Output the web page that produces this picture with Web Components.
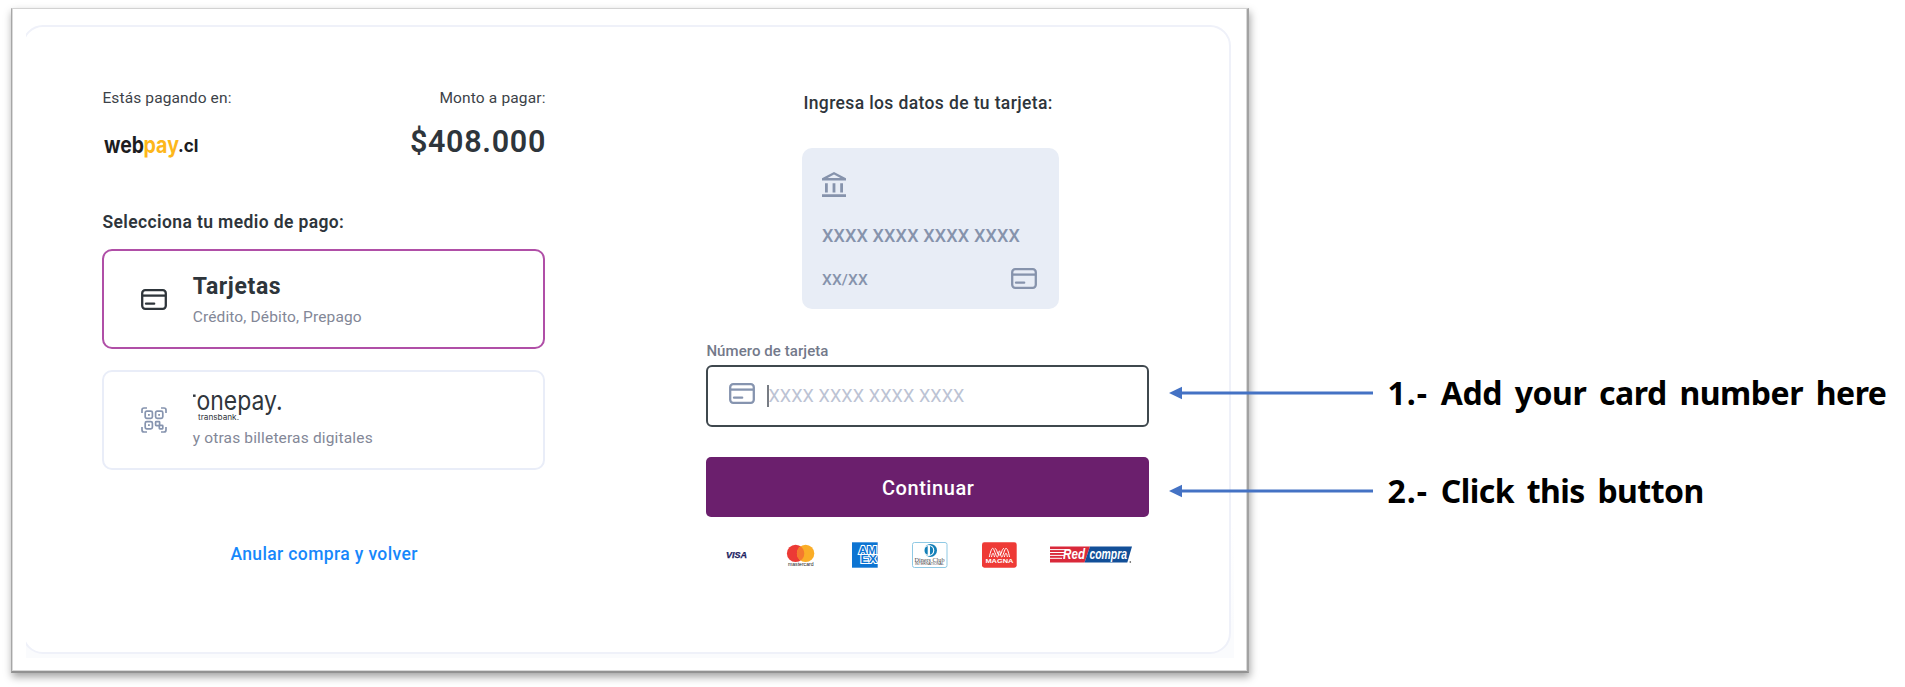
<!DOCTYPE html>
<html lang="es">
<head>
<meta charset="utf-8">
<title>Webpay</title>
<style>
html,body{margin:0;background:#fff;width:1905px;height:687px;overflow:hidden;font-family:Roboto,sans-serif;color:#2e353b}
body{display:flex;align-items:flex-start}
</style>
</head>
<body>
<pay-frame>
  <pay-summary slot="left"></pay-summary>
  <pay-form slot="right"></pay-form>
</pay-frame>
<guide-notes></guide-notes>
<script>
const define=(name,html,after)=>{
  const t=document.createElement('template');t.innerHTML=html;
  customElements.define(name,class extends HTMLElement{
    connectedCallback(){
      if(this.shadowRoot)return;
      this.attachShadow({mode:'open'}).appendChild(t.content.cloneNode(true));
      if(after)after(this);
    }
  });
};

/* One line of text whose tracking is set so that it spans the given width. */
define('text-line',`<style>:host{display:block;white-space:nowrap}span{display:inline-block}</style><span><slot></slot></span>`,el=>{
  const s=el.shadowRoot.querySelector('span'),w=+el.getAttribute('span');
  if(w){const gap=(w-s.getBoundingClientRect().width)/(el.textContent.length-1);
    s.style.letterSpacing=gap+'px';s.style.marginRight=-gap+'px';}
});

define('card-icon',`<style>:host{display:block;width:26px;height:21px;flex:none}svg{display:block}</style>
<svg width="26" height="21" viewBox="0 0 26 21" fill="none" stroke="currentColor" stroke-width="2.3"><rect x="1.2" y="1.2" width="23.6" height="18.6" rx="3"/><path d="M1.2 6.6H24.8"/><path d="M5 14.7H13.2" stroke-linecap="round"/></svg>`);

define('bank-icon',`<style>:host{display:block;width:24px;height:25px}svg{display:block}</style>
<svg width="24" height="25" viewBox="0 0 24 25" fill="currentColor"><path fill-rule="evenodd" d="M12 0L24 6.2V8.4H0V6.2ZM12 2.5L5.6 6H18.4Z"/><path d="M3 11.3H5.8V20.4H3ZM10.6 11.3H13.4V20.4H10.6ZM18.2 11.3H21V20.4H18.2ZM0 22.3H24V25H0Z"/></svg>`);

define('qr-icon',`<style>:host{display:block;width:26px;height:26px;flex:none}svg{display:block}</style>
<svg width="26" height="26" viewBox="0 0 26 26" fill="none" stroke="currentColor" stroke-width="1.7"><path d="M1 6V3Q1 1 3 1H6M20 1H23Q25 1 25 3V6M25 20V23Q25 25 23 25H20M6 25H3Q1 25 1 23V20"/><rect x="4.2" y="4.2" width="7.2" height="7.2" rx="1.6"/><rect x="14.6" y="4.2" width="7.2" height="7.2" rx="1.6"/><rect x="4.2" y="14.6" width="7.2" height="7.2" rx="1.6"/><rect x="14.6" y="14.6" width="4" height="4" rx=".6"/><rect x="18.3" y="18.3" width="3.5" height="3.5" rx=".6"/><path stroke="none" fill="currentColor" d="M7 7h1.8v1.8H7zM17.2 7h1.8v1.8h-1.8zM7 17.2h1.8v1.8H7z"/></svg>`);

define('pay-frame',`<style>
:host{display:block;box-sizing:border-box;flex:none;width:1238px;height:665px;margin:8px 0 0 11px;padding:16px 0 0 14px;background:#fff;
border-style:solid;border-width:1px 2px 2px 1px;border-color:#d2d2d2 #a2a2a2 #929292 #a6a6a6;
box-shadow:1px 4px 8px rgba(0,0,0,.36),inset -1px -1px 0 #d8d8d8,inset 1px 0 0 #dadada}
.clip{overflow:hidden;width:1208px;height:633px;background:linear-gradient(#fff 500px,#fafbfd 600px)}
.card{box-sizing:border-box;width:1209px;height:629px;margin-left:-4px;border:2px solid #eff1f9;border-radius:21px;background:#fff;
display:grid;grid-template-columns:443px 443px;column-gap:161px;padding-left:78.4px;align-items:start}
</style><div class="clip"><div class="card"><slot name="left"></slot><slot name="right"></slot></div></div>`);

define('webpay-logo',`<style>:host{display:block;height:36px}svg{display:block;overflow:visible}text{font-family:Inter,sans-serif;font-weight:700}</style>
<svg width="100" height="36"><text x="2" y="28.5" font-size="23" textLength="40" lengthAdjust="spacingAndGlyphs" fill="#1d1d1f">web</text><text x="41.5" y="28.5" font-size="23" font-weight="600" textLength="35.5" lengthAdjust="spacingAndGlyphs" fill="#fdb71a">pay</text><text x="76" y="28" font-size="18" textLength="20.5" lengthAdjust="spacingAndGlyphs" fill="#1d1d1f">.cl</text></svg>`);

define('onepay-logo',`<style>:host{display:block;height:32px}svg{display:block;margin-top:-12px;overflow:visible}text{font-family:Inter,sans-serif;fill:#30363c}</style>
<svg width="110" height="50"><rect x="0" y="14.5" width="2.6" height="2.4" fill="#30363c"/><text x="3.5" y="29.5" font-size="26" textLength="86" lengthAdjust="spacingAndGlyphs">onepay.</text><text x="5" y="40" font-size="8" textLength="41" lengthAdjust="spacingAndGlyphs">transbank.</text></svg>`);

define('pay-option',`<style>
:host{box-sizing:border-box;display:flex;align-items:center;gap:26px;height:100px;border:2px solid #e9edf8;border-radius:10px;padding-left:36.3px;color:#8694af;background:#fff}
:host([selected]){border-color:#b04fa7;color:#2e353b}
.body{display:flex;flex-direction:column;gap:6px;margin-top:2px}
:host(:not([selected])) .body{gap:4px;margin-top:0}
.sub{font-size:15.5px;line-height:20px;color:#838797}
</style><slot name="icon"></slot><div class="body"><slot name="title"></slot><div class="sub"><slot></slot></div></div>`);

define('pay-summary',`<style>
:host{display:flex;flex-direction:column;padding-top:61px}
header{display:flex;justify-content:space-between}
header>div{display:flex;flex-direction:column;gap:16px}
.r{align-items:flex-end}
.label{font-size:15.5px;line-height:20px;color:#3c4248}
.amount{font-size:30.5px;line-height:36px;font-weight:600}
.h{font-size:17.5px;line-height:24px;font-weight:600;margin:50px 0 15px}
.t{font-size:23px;line-height:28px;font-weight:700}
.second{margin-top:21px}
.cancel{align-self:center;margin-top:72px;font-size:17.5px;line-height:24px;font-weight:500;color:#1787fb}
</style>
<header><div><text-line class="label" span="129">Estás pagando en:</text-line><webpay-logo></webpay-logo></div>
<div class="r"><text-line class="label" span="106">Monto a pagar:</text-line><text-line class="amount" span="135.5">$408.000</text-line></div></header>
<text-line class="h" span="241.5">Selecciona tu medio de pago:</text-line>
<pay-option selected><card-icon slot="icon"></card-icon><text-line slot="title" class="t" span="88">Tarjetas</text-line><text-line span="169">Crédito, Débito, Prepago</text-line></pay-option>
<pay-option class="second"><qr-icon slot="icon"></qr-icon><onepay-logo slot="title"></onepay-logo><text-line span="180">y otras billeteras digitales</text-line></pay-option>
<text-line class="cancel" span="187">Anular compra y volver</text-line>`);

define('card-preview',`<style>
:host{box-sizing:border-box;display:flex;flex-direction:column;width:257px;height:161px;border-radius:10px;background:#e8edf6;padding:24px 22px 0 20px;color:#8693ac}
.num{font-size:18px;line-height:24px;font-weight:500;margin-top:27px}
.row{display:flex;justify-content:space-between;align-items:center;margin-top:17px}
.exp{font-size:15.5px;line-height:22px;font-weight:500;padding-top:4px}
</style><bank-icon></bank-icon><text-line class="num" span="198">XXXX XXXX XXXX XXXX</text-line>
<div class="row"><text-line class="exp" span="46">XX/XX</text-line><card-icon></card-icon></div>`);

define('card-field',`<style>
:host{display:block}
.label{font-size:15px;line-height:20px;font-weight:500;color:#73798a}
.box{box-sizing:border-box;height:62px;margin-top:4px;border:2px solid #3f484e;border-radius:6px;display:flex;align-items:center;padding:0 0 1px 21px;color:#8694af}
.caret{width:2px;height:22px;background:#777c83;margin-left:12px}
card-icon{margin-top:-4px}
.ph{font-size:18px;line-height:24px;color:#bcc3d4;margin-left:-1px;padding-top:1px}
</style><text-line class="label" span="122">Número de tarjeta</text-line>
<div class="box"><card-icon></card-icon><div class="caret"></div><text-line class="ph" span="196">XXXX XXXX XXXX XXXX</text-line></div>`);

define('brand-row',`<style>:host{display:block;height:30px}svg{display:block}text{font-family:"Liberation Sans",sans-serif}</style>
<svg width="443" height="30" viewBox="706 540 443 30">
<text x="726" y="558" font-size="8.6" font-weight="700" font-style="italic" fill="#20225f" stroke="#20225f" stroke-width=".25" textLength="21" lengthAdjust="spacingAndGlyphs">VISA</text>
<circle cx="795.6" cy="553.4" r="8.7" fill="#ec3a35"/><circle cx="805.6" cy="553.4" r="8.7" fill="#faad27"/><path d="M800.6 546.3A8.7 8.7 0 0 1 800.6 560.5A8.7 8.7 0 0 1 800.6 546.3Z" fill="#f4792e"/>
<text x="788" y="566.3" font-size="5" font-family="Inter" fill="#222" textLength="25.5" lengthAdjust="spacingAndGlyphs">mastercard</text>
<rect x="852" y="542.3" width="25.7" height="25.4" fill="#0d74d2"/>
<g fill="#0d74d2" stroke="#fff" stroke-width="1.8" paint-order="stroke" font-weight="700"><text x="858.5" y="554" font-size="10" textLength="18.5" lengthAdjust="spacingAndGlyphs">AM</text><text x="860.5" y="562.6" font-size="10" textLength="16.5" lengthAdjust="spacingAndGlyphs">EX</text></g>
<rect x="912.5" y="542.5" width="34.5" height="25" rx="2" fill="#fff" stroke="#8fc9e4"/>
<circle cx="930.5" cy="550.4" r="6.5" fill="#1480b8"/><circle cx="928.8" cy="550.4" r="5.5" fill="#fff"/><path d="M927.7 546.1A4.5 4.5 0 0 0 927.7 554.7ZM930 546.1A4.5 4.5 0 0 1 930 554.7Z" fill="#1480b8"/>
<text x="914.5" y="561.7" font-size="6" style="font-family:'Liberation Serif',serif" fill="#444" textLength="30" lengthAdjust="spacingAndGlyphs">Diners Club</text><text x="915" y="565.4" font-size="3" fill="#444" textLength="29" lengthAdjust="spacingAndGlyphs">INTERNATIONAL</text>
<rect x="982" y="542.3" width="34.7" height="25.4" rx="2.4" fill="#ee3a36"/>
<path d="M989.3 557C990.5 552 991.5 548.3 992.8 548.3S996 557 997.3 557S998.6 550.8 999.4 550.8S1000.6 557 1001.8 557S1004.6 548.3 1006 548.3S1008.5 552 1009.5 557M991.5 557C992.5 552 993.5 552 994.5 557M1004.3 557C1005.5 552 1006.5 552 1007.4 557M994.8 548.3C997.5 549 997 555 999.4 555S1001.4 549 1004 548.3" fill="none" stroke="#fff" stroke-width="1"/>
<text x="985.4" y="563.4" font-size="5.8" font-weight="700" fill="#fff" textLength="28" lengthAdjust="spacingAndGlyphs">MAGNA</text>
<path d="M1050 546.5H1090L1084.5 562.5H1050Z" fill="#d9293a"/><path d="M1090 546.5H1132L1127.3 562.5H1084.5Z" fill="#124f98"/>
<path d="M1050 549.6H1066M1050 552.5H1065M1050 555.4H1064M1050 558.3H1062" stroke="#fff" stroke-width="1"/>
<text x="1063" y="559.3" font-size="15" font-weight="700" font-style="italic" fill="#fff" textLength="22" lengthAdjust="spacingAndGlyphs">Red</text><text x="1089.5" y="559" font-size="14.5" font-weight="700" font-style="italic" fill="#fff" textLength="37.5" lengthAdjust="spacingAndGlyphs">compra</text><circle cx="1130.3" cy="562" r=".8" fill="#333"/>
</svg>`);

define('pay-form',`<style>
:host{display:flex;flex-direction:column;padding-top:64px}
.h{align-self:center;font-size:17.5px;line-height:24px;font-weight:500;margin-bottom:33px}
card-preview{align-self:center;margin-left:5px}
card-field{margin-top:32px}
button{all:unset;box-sizing:border-box;display:flex;justify-content:center;height:60px;margin-top:30px;background:#6b1f6d;border-radius:5px;color:#fff;font-weight:500;font-size:20px;line-height:62px}
brand-row{margin-top:23px}
</style><text-line class="h" span="249">Ingresa los datos de tu tarjeta:</text-line>
<card-preview></card-preview><card-field></card-field>
<button><text-line span="92">Continuar</text-line></button><brand-row></brand-row>`);

define('guide-note',`<style>
:host{display:flex;align-items:center;height:44px;gap:15px}
svg{display:block;flex:none}
</style><svg width="204" height="14"><path d="M0 7L13 .7V13.3Z" fill="#4472c4"/><path d="M12 7H204" stroke="#4472c4" stroke-width="2.8"/></svg><slot></slot>`);

define('guide-notes',`<style>
:host{display:flex;flex-direction:column;gap:54px;flex:none;margin:371px 0 0 -80.5px;z-index:1}
text-line{font:700 32px/44px "Noto Sans","Noto Sans CJK KR",sans-serif;color:#000;word-spacing:5px}
.n{letter-spacing:1px}
</style><guide-note><text-line span="498"><span class="n">1.-</span> Add your card number here</text-line></guide-note><guide-note><text-line span="315"><span class="n">2.-</span> Click this button</text-line></guide-note>`);
</script>
</body>
</html>
